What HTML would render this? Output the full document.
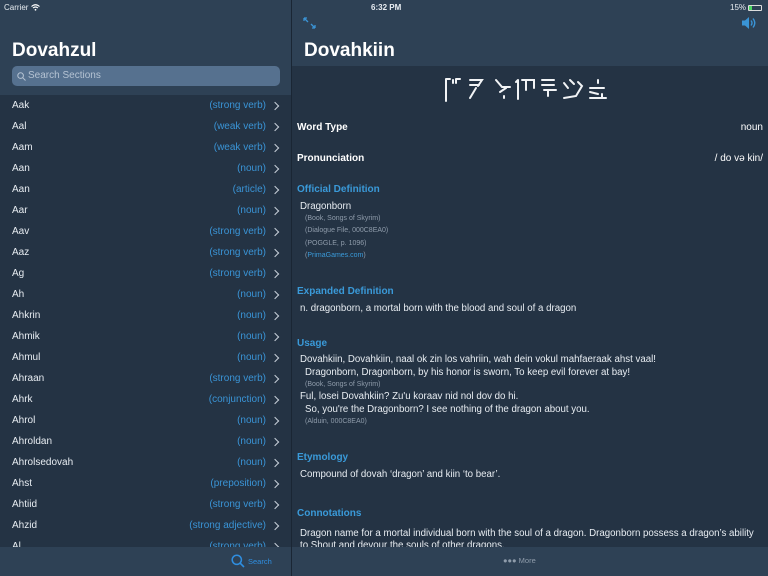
<!DOCTYPE html>
<html><head><meta charset="utf-8"><style>
*{margin:0;padding:0;box-sizing:border-box}
body{width:768px;height:576px;overflow:hidden;background:#243344;font-family:"Liberation Sans",sans-serif;color:#fff;position:relative}
.left{position:absolute;left:0;top:0;width:291px;height:576px;background:#243344}
.lh{position:absolute;left:0;top:0;width:291px;height:95px;background:#2e4155}
.divider{position:absolute;left:291px;top:0;width:1px;height:576px;background:#1a2634}
.status{position:absolute;top:3px;font-size:8px;color:#e8edf2}
.title{position:absolute;font-weight:bold;font-size:19px}
.search{position:absolute;left:12px;top:66px;width:268px;height:20px;border-radius:5px;background:#56718f;color:#b5c3d3;font-size:10px;line-height:20px;padding-left:16px}
.row{position:absolute;left:0;width:291px;height:21px;font-size:10px;line-height:21px}
.row .w{position:absolute;left:12px;color:#e8edf2}
.row .t{position:absolute;right:25px;color:#3a94d6}
.row .c{position:absolute;right:13px;top:8px;width:6px;height:6px;border-right:1.4px solid #c8d0da;border-top:1.4px solid #c8d0da;transform:rotate(45deg)}
.tab{position:absolute;left:0;top:547px;width:291px;height:29px;background:#2e4155}
.right{position:absolute;left:292px;top:0;width:476px;height:576px;background:#243344}
.rh{position:absolute;left:0;top:0;width:476px;height:66px;background:#2e4155}
.lbl{position:absolute;left:5px;font-size:10px;font-weight:bold;color:#fff}
.val{position:absolute;right:5px;font-size:10px;color:#fff}
.sec{position:absolute;left:5px;font-size:10px;font-weight:bold;color:#3a9ad9}
.tx{position:absolute;left:8px;font-size:9.7px;color:#e8edf2;white-space:nowrap}
.sm{position:absolute;left:13px;font-size:7px;color:#8f9cab;white-space:nowrap}
.rtab{position:absolute;left:0;top:547px;width:476px;height:29px;background:#2e4155}
</style></head><body>
<div class="left">
 <div class="lh"></div>
 <div class="status" style="left:4px">Carrier <svg width="9" height="7" viewBox="0 0 9 7" style="vertical-align:-1px"><path d="M0.5 2.5 Q4.5 -1 8.5 2.5 M2 4 Q4.5 2 7 4" stroke="#fff" fill="none" stroke-width="1.1"/><circle cx="4.5" cy="5.8" r="0.9" fill="#fff"/></svg></div>
 <div class="title" style="left:12px;top:40px">Dovahzul</div>
 <div class="search"><svg width="9" height="9" viewBox="0 0 9 9" style="position:absolute;left:5px;top:6px"><circle cx="3.6" cy="3.6" r="2.8" stroke="#b5c3d3" fill="none" stroke-width="1"/><path d="M5.7 5.7 L8.5 8.5" stroke="#b5c3d3" stroke-width="1"/></svg>Search Sections</div>
 <div class="row" style="top:95px"><span class="w">Aak</span><span class="t">(strong verb)</span><i class="c"></i></div>
 <div class="row" style="top:116px"><span class="w">Aal</span><span class="t">(weak verb)</span><i class="c"></i></div>
 <div class="row" style="top:137px"><span class="w">Aam</span><span class="t">(weak verb)</span><i class="c"></i></div>
 <div class="row" style="top:158px"><span class="w">Aan</span><span class="t">(noun)</span><i class="c"></i></div>
 <div class="row" style="top:179px"><span class="w">Aan</span><span class="t">(article)</span><i class="c"></i></div>
 <div class="row" style="top:200px"><span class="w">Aar</span><span class="t">(noun)</span><i class="c"></i></div>
 <div class="row" style="top:221px"><span class="w">Aav</span><span class="t">(strong verb)</span><i class="c"></i></div>
 <div class="row" style="top:242px"><span class="w">Aaz</span><span class="t">(strong verb)</span><i class="c"></i></div>
 <div class="row" style="top:263px"><span class="w">Ag</span><span class="t">(strong verb)</span><i class="c"></i></div>
 <div class="row" style="top:284px"><span class="w">Ah</span><span class="t">(noun)</span><i class="c"></i></div>
 <div class="row" style="top:305px"><span class="w">Ahkrin</span><span class="t">(noun)</span><i class="c"></i></div>
 <div class="row" style="top:326px"><span class="w">Ahmik</span><span class="t">(noun)</span><i class="c"></i></div>
 <div class="row" style="top:347px"><span class="w">Ahmul</span><span class="t">(noun)</span><i class="c"></i></div>
 <div class="row" style="top:368px"><span class="w">Ahraan</span><span class="t">(strong verb)</span><i class="c"></i></div>
 <div class="row" style="top:389px"><span class="w">Ahrk</span><span class="t">(conjunction)</span><i class="c"></i></div>
 <div class="row" style="top:410px"><span class="w">Ahrol</span><span class="t">(noun)</span><i class="c"></i></div>
 <div class="row" style="top:431px"><span class="w">Ahroldan</span><span class="t">(noun)</span><i class="c"></i></div>
 <div class="row" style="top:452px"><span class="w">Ahrolsedovah</span><span class="t">(noun)</span><i class="c"></i></div>
 <div class="row" style="top:473px"><span class="w">Ahst</span><span class="t">(preposition)</span><i class="c"></i></div>
 <div class="row" style="top:494px"><span class="w">Ahtiid</span><span class="t">(strong verb)</span><i class="c"></i></div>
 <div class="row" style="top:515px"><span class="w">Ahzid</span><span class="t">(strong adjective)</span><i class="c"></i></div>
 <div class="row" style="top:536px"><span class="w">Al</span><span class="t">(strong verb)</span><i class="c"></i></div>
 <div class="tab"><svg width="14" height="14" viewBox="0 0 14 14" style="position:absolute;left:231px;top:7px"><circle cx="5.8" cy="5.8" r="4.6" stroke="#2f8ee0" fill="none" stroke-width="1.5"/><path d="M9.2 9.2 L13 13" stroke="#2f8ee0" stroke-width="1.6"/></svg><span style="position:absolute;left:248px;top:10px;font-size:7.5px;color:#2f8ee0">Search</span></div>
</div>
<div class="divider"></div>
<div class="right">
 <div class="rh"></div>
 <div class="status" style="left:79px;font-weight:bold">6:32 PM</div>
 <div class="status" style="left:438px">15% <span style="display:inline-block;width:14px;height:6px;border:1px solid #ddd;border-radius:1px;vertical-align:-1px;position:relative"><span style="position:absolute;left:0;top:0;width:3px;height:4px;background:#4cd964"></span></span></div>
 <svg width="14" height="12" viewBox="0 0 14 12" style="position:absolute;left:11px;top:17px"><path d="M1 1 L5 5 M1 1 L1 4 M1 1 L4 1 M12 11 L8 7 M12 11 L12 8 M12 11 L9 11" stroke="#3a94d6" stroke-width="1.3" fill="none"/></svg>
 <svg width="16" height="14" viewBox="0 0 16 14" style="position:absolute;left:449px;top:16px"><path d="M1 4.5 H4 L8 1 V13 L4 9.5 H1 Z" fill="#3a94d6"/><path d="M10 4.5 Q12 7 10 9.5 M12 2.5 Q15.5 7 12 11.5" stroke="#3a94d6" stroke-width="1.4" fill="none"/></svg>
 <div class="title" style="left:12px;top:40px">Dovahkiin</div>
 <svg width="180" height="30" viewBox="0 0 180 30" style="position:absolute;left:148px;top:74px" stroke="#f2f4f6" stroke-width="2" fill="none" stroke-linecap="round">
  <path d="M6 5 V27 M6 5 H10 M13 6 V9 M16 5 V9 M16 5 H20"/>
  <path d="M30 6 H42 L38 12 M30 11 H39 M36 14 L30 24"/>
  <path d="M56 6 L62 13 H70 M60 18 L66 14 M64 22 V24"/>
  <path d="M76 8 L78 6 M78 6 V25 M82 6 H94 V14 M86 6 V16"/>
  <path d="M102 6 H114 M102 11 H114 M104 16 H116 M108 16 V22"/>
  <path d="M124 9 L128 14 M130 6 L134 10 M138 8 L142 12 L136 22 L124 24"/>
  <path d="M158 6 V9 M150 14 H164 M150 18 L158 20 M150 24 H166 M162 20 V24"/>
 </svg>
 <div class="lbl" style="top:122px">Word Type</div><div class="val" style="top:122px">noun</div>
 <div class="lbl" style="top:153px">Pronunciation</div><div class="val" style="top:153px">/ do və kin/</div>
 <div class="sec" style="top:184px">Official Definition</div>
 <div class="tx" style="top:201px">Dragonborn</div>
 <div class="sm" style="top:215px">(Book, Songs of Skyrim)</div>
 <div class="sm" style="top:227px">(Dialogue File,  000C8EA0)</div>
 <div class="sm" style="top:240px">(POGGLE, p. 1096)</div>
 <div class="sm" style="top:252px">(<span style="color:#3a9ad9">PrimaGames.com</span>)</div>
 <div class="sec" style="top:286px">Expanded Definition</div>
 <div class="tx" style="top:303px">n. dragonborn, a mortal born with the blood  and soul of a dragon</div>
 <div class="sec" style="top:338px">Usage</div>
 <div class="tx" style="top:354px">Dovahkiin, Dovahkiin,  naal ok zin los vahriin, wah dein vokul mahfaeraak ahst vaal!</div>
 <div class="tx" style="top:367px;left:13px">Dragonborn, Dragonborn,  by his honor is sworn, To keep evil forever at bay!</div>
 <div class="sm" style="top:381px">(Book, Songs of Skyrim)</div>
 <div class="tx" style="top:391px">Ful, losei Dovahkiin?  Zu'u koraav nid nol dov do hi.</div>
 <div class="tx" style="top:404px;left:13px">So, you're the  Dragonborn? I see nothing of the dragon about you.</div>
 <div class="sm" style="top:418px">(Alduin,  000C8EA0)</div>
 <div class="sec" style="top:452px">Etymology</div>
 <div class="tx" style="top:469px">Compound of dovah ‘dragon’ and kiin ‘to  bear’.</div>
 <div class="sec" style="top:508px">Connotations</div>
 <div class="tx" style="top:528px">Dragon name for a mortal individual born with  the soul of a dragon. Dragonborn possess a dragon’s ability</div>
 <div class="tx" style="top:540px">to Shout and devour the souls of other dragons.</div>
 <div class="rtab"><span style="position:absolute;left:211px;top:9px;font-size:7.5px;color:#8f9cab">●●● More</span></div>
</div>
</body></html>
